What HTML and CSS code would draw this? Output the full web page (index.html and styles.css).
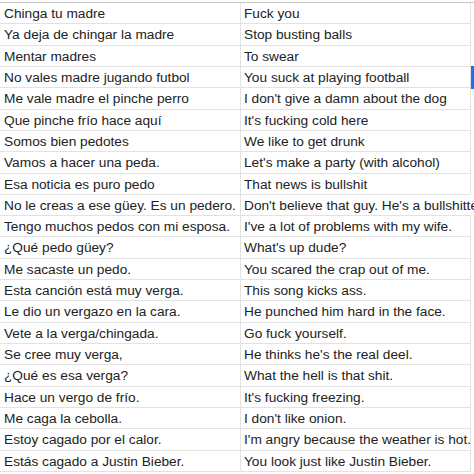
FILE: index.html
```html
<!DOCTYPE html>
<html>
<head>
<meta charset="utf-8">
<link rel="stylesheet" href="styles.css">
</head>
<body>
<div class="sheet">
  <div class="cell">Chinga tu madre</div><div class="cell">Fuck you</div>
  <div class="cell">Ya deja de chingar la madre</div><div class="cell">Stop busting balls</div>
  <div class="cell">Mentar madres</div><div class="cell">To swear</div>
  <div class="cell">No vales madre jugando futbol</div><div class="cell sel">You suck at playing football</div>
  <div class="cell">Me vale madre el pinche perro</div><div class="cell">I don't give a damn about the dog</div>
  <div class="cell">Que pinche frío hace aquí</div><div class="cell">It's fucking cold here</div>
  <div class="cell">Somos bien pedotes</div><div class="cell">We like to get drunk</div>
  <div class="cell">Vamos a hacer una peda.</div><div class="cell">Let's make a party (with alcohol)</div>
  <div class="cell">Esa noticia es puro pedo</div><div class="cell">That news is bullshit</div>
  <div class="cell">No le creas a ese güey. Es un pedero.</div><div class="cell spill">Don't believe that guy. He's a bullshitter.</div>
  <div class="cell">Tengo muchos pedos con mi esposa.</div><div class="cell">I've a lot of problems with my wife.</div>
  <div class="cell">¿Qué pedo güey?</div><div class="cell">What's up dude?</div>
  <div class="cell">Me sacaste un pedo.</div><div class="cell">You scared the crap out of me.</div>
  <div class="cell">Esta canción está muy verga.</div><div class="cell">This song kicks ass.</div>
  <div class="cell">Le dio un vergazo en la cara.</div><div class="cell">He punched him hard in the face.</div>
  <div class="cell">Vete a la verga/chingada.</div><div class="cell">Go fuck yourself.</div>
  <div class="cell">Se cree muy verga,</div><div class="cell">He thinks he's the real deel.</div>
  <div class="cell">¿Qué es esa verga?</div><div class="cell">What the hell is that shit.</div>
  <div class="cell">Hace un vergo de frío.</div><div class="cell">It's fucking freezing.</div>
  <div class="cell">Me caga la cebolla.</div><div class="cell">I don't like onion.</div>
  <div class="cell">Estoy cagado por el calor.</div><div class="cell">I'm angry because the weather is hot.</div>
  <div class="cell">Estás cagado a Justin Bieber.</div><div class="cell">You look just like Justin Bieber.</div>
</div>
</body>
</html>
```
FILE: styles.css
```css
html, body {
  margin: 0;
  padding: 0;
  background: #ffffff;
}
body {
  width: 474px;
  height: 474px;
  overflow: hidden;
  padding-top: 3px;
  box-sizing: border-box;
}
.sheet {
  display: grid;
  grid-template-columns: 241px 230px;
  grid-auto-rows: 21.32px;
  border-top: 1px solid #c8c8c8;
  margin-top: -1px;
  font-family: "Liberation Sans", Arial, sans-serif;
  font-size: 13.7px;
  color: #222222;
}
.cell {
  position: relative;
  box-sizing: border-box;
  border-bottom: 1px solid #e2e2e2;
  border-right: 1px solid #e2e2e2;
  padding: 1px 0 0 4px;
  line-height: 20px;
  white-space: nowrap;
  overflow: hidden;
}
.cell:nth-child(2n) {
  padding-left: 3px;
  overflow: visible;
}
.spill {
  border-right-color: transparent;
}
.sel::after {
  content: "";
  position: absolute;
  top: -1px;
  right: -4px;
  width: 3px;
  height: 23px;
  background: #1a73e8;
}
```
